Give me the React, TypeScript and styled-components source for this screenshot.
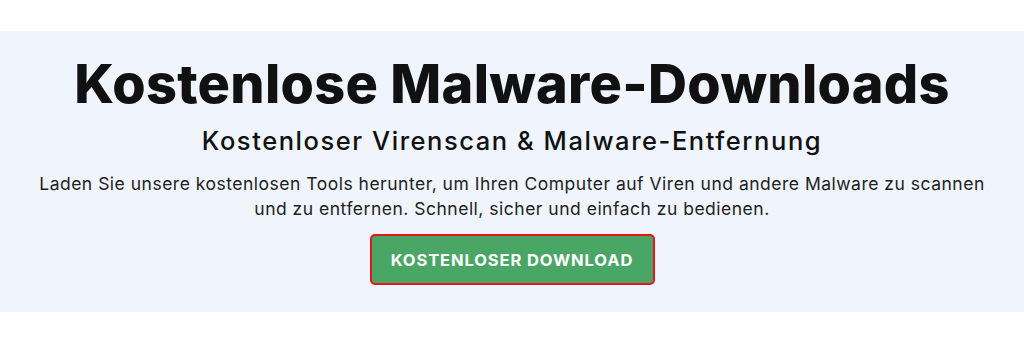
import React from "react";
import styled, { createGlobalStyle } from "styled-components";

const Global = createGlobalStyle`
  html, body { margin: 0; padding: 0; background: #ffffff; }
  body { font-family: "Inter", "Open Sans", sans-serif; }
`;

const Page = styled.div`
  width: 1024px;
  padding-top: 31px;
  background: #ffffff;
`;

const Hero = styled.section`
  background: #f0f4fd;
  height: 281px;
  box-sizing: border-box;
  padding-top: 23px;
  display: flex;
  flex-direction: column;
  align-items: center;
  text-align: center;
`;

const Title = styled.h1`
  margin: 0;
  font-family: "Inter", sans-serif;
  font-weight: 800;
  font-size: 54px;
  line-height: 60px;
  color: #111111;
  letter-spacing: 0.3px;
`;

const Subtitle = styled.h2`
  margin: 11px 0 0;
  font-family: "Inter", sans-serif;
  font-weight: 500;
  font-size: 25.5px;
  line-height: 32px;
  color: #111111;
  letter-spacing: 1.55px;
`;

const Lead = styled.p`
  margin: 14px 0 0;
  max-width: 960px;
  font-family: "Inter", sans-serif;
  font-weight: 400;
  font-size: 17.5px;
  line-height: 25px;
  color: #222222;
  letter-spacing: 0.5px;
`;

const Button = styled.button`
  margin-top: 13px;
  width: 285px;
  height: 51px;
  box-sizing: border-box;
  border: 2px solid #e8141a;
  border-radius: 5px;
  background: #4aa665;
  color: #ffffff;
  font-family: "Inter", sans-serif;
  font-weight: 700;
  font-size: 16.5px;
  letter-spacing: 0.9px;
  cursor: pointer;
`;

export default function App() {
  return (
    <>
      <Global />
      <Page>
        <Hero>
          <Title>Kostenlose Malware-Downloads</Title>
          <Subtitle>Kostenloser Virenscan &amp; Malware-Entfernung</Subtitle>
          <Lead>
            Laden Sie unsere kostenlosen Tools herunter, um Ihren Computer auf Viren und andere Malware zu scannen
            und zu entfernen. Schnell, sicher und einfach zu bedienen.
          </Lead>
          <Button>KOSTENLOSER DOWNLOAD</Button>
        </Hero>
      </Page>
    </>
  );
}
